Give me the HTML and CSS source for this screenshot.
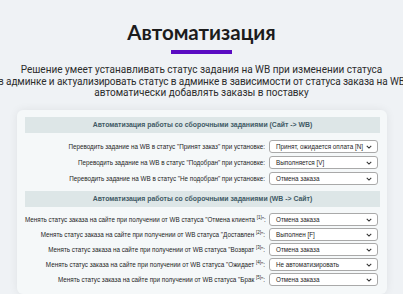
FILE: index.html
```html
<!DOCTYPE html>
<html lang="ru">
<head>
<meta charset="utf-8">
<link rel="stylesheet" href="styles.css">
</head>
<body>
<div class="page">
  <h1 class="title">Автоматизация</h1>
  <div class="bar"></div>
  <p class="lead">Решение умеет устанавливать статус задания на WB при изменении статуса<br><span class="tight">в админке и актуализировать статус в админке в зависимости от статуса заказа на WB</span><br>автоматически добавлять заказы в поставку</p>
  <div class="card">
    <div class="head">Автоматизация работы со сборочными заданиями (Сайт -&gt; WB)</div>
    <div class="rows rows-a">
      <div class="label">Переводить задание на WB в статус "Принят заказ" при установке:</div>
      <div class="select"><span>Принят, ожидается оплата [N]</span><svg viewBox="0 0 8 5" class="chev"><path d="M1 1l3 3 3-3" /></svg></div>
      <div class="label">Переводить задание на WB в статус "Подобран" при установке:</div>
      <div class="select"><span>Выполняется [V]</span><svg viewBox="0 0 8 5" class="chev"><path d="M1 1l3 3 3-3" /></svg></div>
      <div class="label">Переводить задание на WB в статус "Не подобран" при установке:</div>
      <div class="select"><span>Отмена заказа</span><svg viewBox="0 0 8 5" class="chev"><path d="M1 1l3 3 3-3" /></svg></div>
    </div>
    <div class="head">Автоматизация работы со сборочными заданиями (WB -&gt; Сайт)</div>
    <div class="rows rows-b">
      <div class="label">Менять статус заказа на сайте при получении от WB статуса "Отмена клиента <sup>[1]</sup>":</div>
      <div class="select"><span>Отмена заказа</span><svg viewBox="0 0 8 5" class="chev"><path d="M1 1l3 3 3-3" /></svg></div>
      <div class="label">Менять статус заказа на сайте при получении от WB статуса "Доставлен <sup>[2]</sup>":</div>
      <div class="select"><span>Выполнен [F]</span><svg viewBox="0 0 8 5" class="chev"><path d="M1 1l3 3 3-3" /></svg></div>
      <div class="label">Менять статус заказа на сайте при получении от WB статуса "Возврат <sup>[3]</sup>":</div>
      <div class="select"><span>Отмена заказа</span><svg viewBox="0 0 8 5" class="chev"><path d="M1 1l3 3 3-3" /></svg></div>
      <div class="label">Менять статус заказа на сайте при получении от WB статуса "Ожидает <sup>[4]</sup>":</div>
      <div class="select"><span>Не автоматизировать</span><svg viewBox="0 0 8 5" class="chev"><path d="M1 1l3 3 3-3" /></svg></div>
      <div class="label">Менять статус заказа на сайте при получении от WB статуса "Брак <sup>[5]</sup>":</div>
      <div class="select"><span>Отмена заказа</span><svg viewBox="0 0 8 5" class="chev"><path d="M1 1l3 3 3-3" /></svg></div>
    </div>
  </div>
</div>
</body>
</html>
```
FILE: styles.css
```css
html, body {
  margin: 0;
  padding: 0;
  background: #eff2f5;
  overflow: hidden;
}
.page {
  width: 403px;
  height: 294px;
  overflow: hidden;
  display: flex;
  flex-direction: column;
  align-items: center;
}
.title {
  margin: 20px 0 0;
  font-family: Lato, "Open Sans", sans-serif;
  font-weight: 700;
  font-size: 20.5px;
  line-height: 24px;
  color: #1c1c1c;
}
.bar {
  width: 61px;
  height: 4px;
  margin-top: 6px;
  background: #5a0cc2;
}
.lead {
  margin: 10px 0 0;
  width: 500px;
  flex-shrink: 0;
  text-align: center;
  white-space: nowrap;
  font-family: Roboto, "Noto Sans", sans-serif;
  font-size: 10px;
  line-height: 11.7px;
  color: #2c2c2c;
}
.tight {
  letter-spacing: -0.09px;
}
.card {
  align-self: stretch;
  margin: 11px 16px 0 17px;
  padding: 7px 7px 0 8px;
  background: #f5f8f9;
  border-radius: 6px;
  box-shadow: 0 0 10px rgba(0, 0, 0, 0.07);
  flex: 1;
}
.head {
  height: 16px;
  background: #dde6e7;
  text-align: center;
  font-family: Arial, "Liberation Sans", sans-serif;
  font-weight: 700;
  font-size: 6.9px;
  line-height: 16px;
  color: #3f5a65;
}
.rows {
  display: grid;
  grid-template-columns: minmax(0, 1fr) 109px;
  column-gap: 4px;
  align-items: center;
  font-family: Arial, "Liberation Sans", sans-serif;
  font-size: 6.3px;
  color: #1e1e1e;
}
.rows-a { row-gap: 3px; padding: 7px 2px 6px 0; }
.rows-b { row-gap: 2px; padding: 6px 2px 6px 0; }
.label {
  text-align: right;
  white-space: nowrap;
}
.label sup {
  font-size: 4.5px;
  vertical-align: 3px;
  line-height: 0;
}
.select {
  height: 13px;
  box-sizing: border-box;
  border: 1px solid #a9a9a9;
  border-radius: 3px;
  background: #fff;
  display: flex;
  align-items: center;
  justify-content: space-between;
  padding: 0 5px 0 6px;
  color: #1e1e1e;
  white-space: nowrap;
}
.chev {
  width: 6px;
  height: 4px;
  flex-shrink: 0;
  fill: none;
  stroke: #333;
  stroke-width: 1.4;
}
```
